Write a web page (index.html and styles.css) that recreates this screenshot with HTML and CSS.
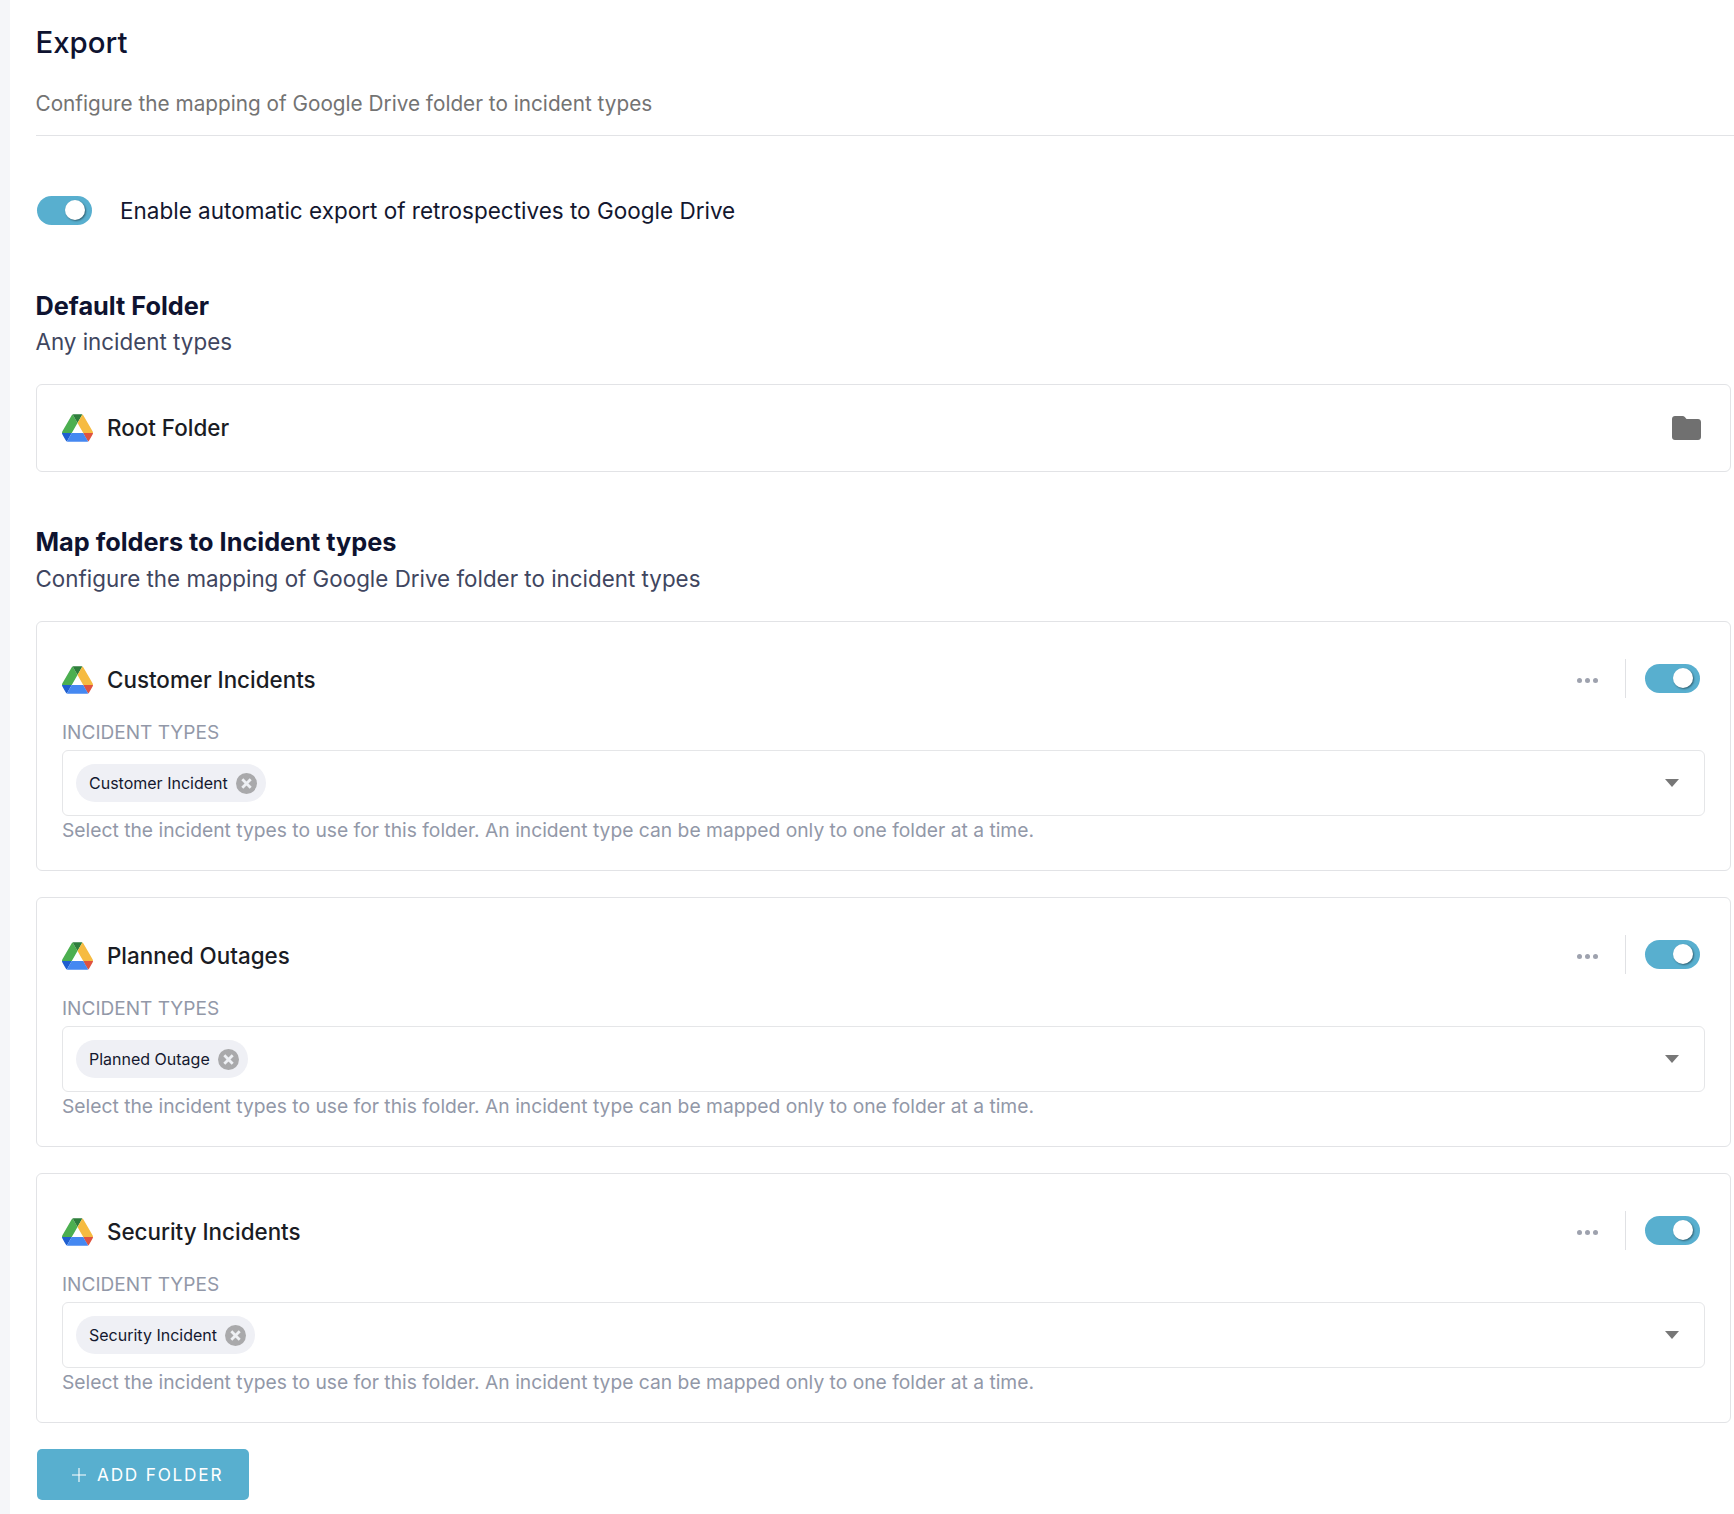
FILE: index.html
```html
<!DOCTYPE html>
<html lang="en">
<head>
<meta charset="utf-8">
<title>Export</title>
<link rel="stylesheet" href="styles.css">
</head>
<body>
<svg class="defs" width="0" height="0" aria-hidden="true">
  <symbol id="drive" viewBox="0 0 87.3 78">
    <path d="m6.6 66.85 3.85 6.65c.8 1.4 1.95 2.5 3.3 3.3l13.75-23.8h-27.5c0 1.55.4 3.1 1.2 4.5z" fill="#1f5fd0"/>
    <path d="m43.65 25-13.75-23.8c-1.35.8-2.5 1.9-3.3 3.3l-25.4 44a9.06 9.06 0 0 0 -1.2 4.5h27.5z" fill="#4caf50"/>
    <path d="m73.55 76.8c1.35-.8 2.5-1.9 3.3-3.3l1.6-2.75 7.65-13.25c.8-1.4 1.2-2.95 1.2-4.5h-27.502l5.852 11.5z" fill="#df5340"/>
    <path d="m43.65 25 13.75-23.8c-1.35-.8-2.9-1.2-4.5-1.2h-18.5c-1.6 0-3.15.45-4.5 1.2z" fill="#2e7d3c"/>
    <path d="m59.8 53h-32.3l-13.75 23.8c1.35.8 2.9 1.2 4.5 1.2h50.8c1.6 0 3.15-.45 4.5-1.2z" fill="#4588f1"/>
    <path d="m73.4 26.5-12.7-22c-.8-1.4-1.95-2.5-3.3-3.3l-13.75 23.8 16.15 28h27.45c0-1.55-.4-3.1-1.2-4.5z" fill="#f6bb41"/>
  </symbol>
  <symbol id="chip-x" viewBox="0 0 21 21">
    <circle cx="10.5" cy="10.5" r="10.5" fill="#a9a9ab"/>
    <path d="M6.3 6.300l8.400 8.400M14.700 6.300l-8.400 8.400" stroke="#eef0f4" stroke-width="2.800" fill="none"/>
  </symbol>
</svg>
<main class="page">
  <header class="head">
    <h1 class="title">Export</h1>
    <p class="subtitle">Configure the mapping of Google Drive folder to incident types</p>
  </header>

  <div class="enable">
    <span class="toggle"><span class="thumb"></span></span>
    <span class="enable-label">Enable automatic export of retrospectives to Google Drive</span>
  </div>

  <section class="default-section">
    <h2 class="section-title">Default Folder</h2>
    <p class="section-sub">Any incident types</p>
    <div class="card root-card">
      <svg class="drive"><use href="#drive"/></svg>
      <span class="folder-name">Root Folder</span>
      <svg class="folder-icon" viewBox="0 0 29 24"><path d="M3 0h7.5c1 0 1.7.4 2.3 1.1L14.5 3H26c1.7 0 3 1.3 3 3v15c0 1.700-1.300 3-3 3H3c-1.700 0-3-1.300-3-3V3c0-1.700 1.300-3 3-3z" fill="#707070"/></svg>
    </div>
  </section>

  <section class="map-section">
    <h2 class="section-title">Map folders to Incident types</h2>
    <p class="section-sub map-sub">Configure the mapping of Google Drive folder to incident types</p>

    <div class="card map-card">
      <div class="map-head">
        <svg class="drive"><use href="#drive"/></svg>
        <span class="folder-name">Customer Incidents</span>
        <span class="dots"><i></i><i></i><i></i></span>
        <span class="sep"></span>
        <span class="toggle"><span class="thumb"></span></span>
      </div>
      <div class="field-label">INCIDENT TYPES</div>
      <div class="select">
        <span class="chip">Customer Incident<svg class="chip-x"><use href="#chip-x"/></svg></span>
        <span class="caret"></span>
      </div>
      <p class="help">Select the incident types to use for this folder. An incident type can be mapped only to one folder at a time.</p>
    </div>

    <div class="card map-card">
      <div class="map-head">
        <svg class="drive"><use href="#drive"/></svg>
        <span class="folder-name">Planned Outages</span>
        <span class="dots"><i></i><i></i><i></i></span>
        <span class="sep"></span>
        <span class="toggle"><span class="thumb"></span></span>
      </div>
      <div class="field-label">INCIDENT TYPES</div>
      <div class="select">
        <span class="chip">Planned Outage<svg class="chip-x"><use href="#chip-x"/></svg></span>
        <span class="caret"></span>
      </div>
      <p class="help">Select the incident types to use for this folder. An incident type can be mapped only to one folder at a time.</p>
    </div>

    <div class="card map-card">
      <div class="map-head">
        <svg class="drive"><use href="#drive"/></svg>
        <span class="folder-name">Security Incidents</span>
        <span class="dots"><i></i><i></i><i></i></span>
        <span class="sep"></span>
        <span class="toggle"><span class="thumb"></span></span>
      </div>
      <div class="field-label">INCIDENT TYPES</div>
      <div class="select">
        <span class="chip">Security Incident<svg class="chip-x"><use href="#chip-x"/></svg></span>
        <span class="caret"></span>
      </div>
      <p class="help">Select the incident types to use for this folder. An incident type can be mapped only to one folder at a time.</p>
    </div>
  </section>

  <button class="add-btn" type="button">
    <svg class="plus" viewBox="0 0 14 14"><path d="M7 0v14M0 7h14" stroke="#fff" stroke-width="1.100" fill="none"/></svg>
    ADD FOLDER
  </button>
</main>
</body>
</html>
```
FILE: styles.css
```css
* { box-sizing: border-box; }
html, body { margin: 0; padding: 0; }
body {
  background: #f5f6f9;
  font-family: Inter, "Liberation Sans", sans-serif;
  color: #1a1c24;
}
.defs { position: absolute; }
.page {
  margin-left: 10px;
  height: 1514px;
  background: #fff;
  padding-left: 26px;
  overflow: hidden;
}
.title {
  margin: 0 0 0 -.5px;
  padding-top: 25px;
  font-size: 29.400px;
  line-height: 36px;
  font-weight: 500;
  color: #0e1330;
}
.subtitle {
  margin: 0 0 0 -.5px;
  padding-top: 29px;
  padding-bottom: 17px;
  font-size: 20.750px;
  line-height: 28px;
  color: #737373;
}
.head { border-bottom: 1px solid #e2e3e6; }
.enable {
  display: flex;
  align-items: center;
  gap: 28px;
  margin-top: 60px;
  padding-left: 1px;
}
.enable-label { font-size: 22.500px; line-height: 29px; color: #13172f; }
.toggle {
  display: block;
  flex: none;
  width: 55px;
  height: 29px;
  border-radius: 15px;
  background: #58afcf;
  position: relative;
}
.thumb {
  position: absolute;
  top: 4px;
  left: 28px;
  width: 20px;
  height: 20px;
  border-radius: 50%;
  background: #fff;
  box-shadow: 1px 1px 2px rgba(0, 0, 0, .45);
}
.default-section { margin-top: 64px; }
.section-title {
  margin: 0 0 0 -.5px;
  font-size: 25.300px;
  line-height: 33px;
  font-weight: 700;
  color: #0e1330;
}
.section-sub {
  margin: 5px 0 0 -.5px;
  font-size: 22.380px;
  line-height: 30px;
  color: #3f4660;
}
.map-sub { margin-top: 6px; }
.card {
  margin-right: 3px;
  background: #fff;
  border: 1px solid #e2e3e6;
  border-radius: 6px;
}
.root-card {
  display: flex;
  align-items: center;
  height: 88px;
  margin-top: 27px;
  padding: 0 29px 0 25px;
}
.drive { width: 31px; height: 28px; flex: none; }
.folder-name {
  margin-left: 14px;
  font-size: 22.400px;
  line-height: 30px;
  font-weight: 500;
  color: #1a1c24;
}
.folder-icon { width: 29px; height: 24px; margin-left: auto; }
.map-section { margin-top: 53px; }
.map-card {
  height: 250px;
  margin-top: 26px;
  padding: 0 25px;
}
.map-section .section-sub + .map-card { margin-top: 27px; }
.map-head {
  display: flex;
  align-items: center;
  height: 48px;
  margin-top: 34px;
  padding-right: 5px;
}
.map-head .toggle { margin-top: -3px; }
.dots {
  display: flex;
  gap: 3px;
  margin-left: auto;
}
.dots i {
  display: block;
  width: 5px;
  height: 5px;
  border-radius: 50%;
  background: #9ea2ae;
}
.sep {
  width: 1px;
  height: 39px;
  margin: -4px 19px 0 27px;
  background: #e0e1e4;
}
.field-label {
  margin-top: 16px;
  font-size: 19.060px;
  line-height: 26px;
  color: #9298a8;
}
.select {
  display: flex;
  align-items: center;
  justify-content: space-between;
  height: 66px;
  margin-top: 4px;
  padding: 0 25px 0 13px;
  border: 1px solid #e5e6e8;
  border-radius: 6px;
}
.chip {
  display: flex;
  align-items: center;
  gap: 8px;
  height: 38px;
  padding: 0 9px 0 13px;
  border-radius: 19px;
  background: #eff0f5;
  font-size: 16px;
  color: #14182f;
}
.chip-x { width: 21px; height: 21px; }
.caret {
  width: 0;
  height: 0;
  border-left: 7.500px solid transparent;
  border-right: 7.500px solid transparent;
  border-top: 8px solid #777;
}
.help {
  margin: 0;
  font-size: 19.250px;
  line-height: 28px;
  color: #9298a8;
}
.add-btn {
  display: flex;
  align-items: center;
  justify-content: flex-start;
  gap: 11px;
  width: 212px;
  height: 51px;
  margin: 26px 0 0 1px;
  padding: 0 0 0 35px;
  border: 0;
  border-radius: 5px;
  background: #58afcf;
  color: #fff;
  font-family: inherit;
  font-size: 17.200px;
  letter-spacing: 1.800px;
}
.plus { width: 14px; height: 14px; }
```
